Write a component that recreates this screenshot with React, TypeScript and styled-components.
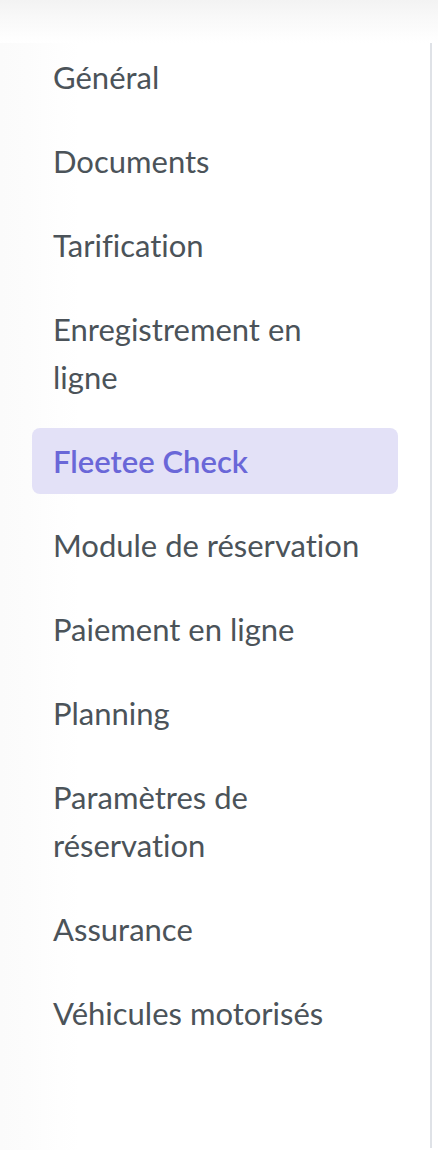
import React from 'react';
import styled, {createGlobalStyle} from "styled-components";

const items = [
    'Général',
    'Documents',
    'Tarification',
    'Enregistrement en ligne',
    'Fleetee Check',
    'Module de réservation',
    'Paiement en ligne',
    'Planning',
    'Paramètres de réservation',
    'Assurance',
    'Véhicules motorisés',
];

const active = 'Fleetee Check';

const App: React.FC = () => {
    return (
        <>
            <GlobalStyle/>
            <Page>
                <TopShade/>
                <Sidebar>
                    <Menu>
                        {items.map(item => (
                            <MenuItem key={item} $active={item === active}>{item}</MenuItem>
                        ))}
                    </Menu>
                </Sidebar>
            </Page>
        </>
    );
}

export default App;

const GlobalStyle = createGlobalStyle`
  html, body {
    margin: 0;
    padding: 0;
    background: #ffffff;
  }

  body {
    font-family: Lato, "Noto Sans", sans-serif;
    font-variant-ligatures: none;
    font-feature-settings: "liga" 0, "clig" 0;
  }
`

const Page = styled.div`
  width: 438px;
  height: 1150px;
  display: flex;
  flex-direction: column;
  background: linear-gradient(to right, #fbfbfb 0, #fcfcfc 27px, #fefefe 60px, #ffffff 80px);
`

const TopShade = styled.div`
  height: 43px;
  flex-shrink: 0;
  background: linear-gradient(to bottom, #f3f3f3 0%, #f9f9f9 45%, #ffffff 100%);
`

const Sidebar = styled.nav`
  width: 430px;
  height: 1105px;
  border-right: 2px solid #dfe2e7;
  box-sizing: content-box;
`

const Menu = styled.ul`
  list-style: none;
  margin: 0;
  padding: 1px 32px 0 32px;
  display: flex;
  flex-direction: column;
  gap: 18px;
`

const MenuItem = styled.li<{ $active?: boolean }>`
  padding: 9px 30px 9px 21px;
  border-radius: 8px;
  font-size: 31px;
  line-height: 48px;
  color: ${p => p.$active ? '#6a67d8' : '#4b5359'};
  background: ${p => p.$active ? '#e3e1f7' : 'transparent'};
  font-weight: ${p => p.$active ? 600 : 400};
  cursor: pointer;
`
